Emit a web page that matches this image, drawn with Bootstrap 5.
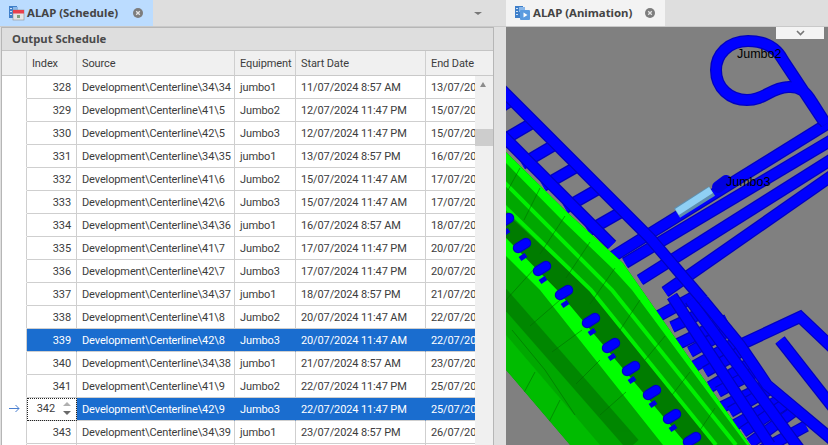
<!DOCTYPE html>
<html lang="en">
<head>
    <meta charset="UTF-8">
    <meta name="viewport" content="width=device-width, initial-scale=1.0">
    <title>ALAP</title>
    <link href="https://cdn.jsdelivr.net/npm/bootstrap@5.3.0/dist/css/bootstrap.min.css" rel="stylesheet">
    <style>
        html, body { height: 445px; overflow: hidden; }
        body { background: #e0e0e0; font-family: "Noto Sans", "Open Sans", sans-serif; font-size: 11px; color: #3c3c3c; }
        .left-pane { width: 506px; }
        .right-pane { width: 322px; }
        .tabstrip { height: 27px; background: #dedede; border-bottom: 1px solid #c9c9c9; }
        .doc-tab { height: 26px; font-weight: 700; font-size: 11.4px; color: #444; gap: 2px; }
        .doc-tab.schedule { width: 153px; background: #bbdcff; padding-left: 9px; }
        .doc-tab.animation { width: 159px; background: #f3f3f3; padding-left: 9px; }
        .doc-tab .close-dot { margin-left: auto; margin-right: 10px; }
        .strip-arrow { width: 0; height: 0; border-left: 4px solid transparent; border-right: 4px solid transparent; border-top: 3px solid #777; margin-right: 24px; }
        .group-box { width: 493px; height: 418px; margin-left: 1px; border: 1px solid #b6b6b6; border-bottom: 0; background: #fff; overflow: hidden; }
        .group-title { height: 23px; background: #dedede; font-weight: 700; font-size: 11.3px; color: #4a4a4a; padding-left: 10px; border-bottom: 1px solid #c4c4c4; }
        .grid-wrap { position: relative; height: 395px; overflow: hidden; }
        table.sched { table-layout: fixed; width: 600px; border-collapse: separate; border-spacing: 0; margin: 0; }
        table.sched th, table.sched td { height: 23px; padding: 2px 2px 0 5px; border-right: 1px solid #cfcfcf; border-bottom: 1px solid #cfcfcf; white-space: nowrap; overflow: hidden; font-family: Roboto, "Noto Sans", sans-serif; font-weight: 400; font-size: 11px; letter-spacing: -.12px; color: #3c3c3c; vertical-align: middle; background: #fff; box-shadow: none; }
        table.sched th { height: 25px; background: #f0f0f0; border-bottom-color: #c9c9c9; }
        table.sched td.ind { background: #fff; border-bottom-color: transparent; text-align: center; padding: 0; }
        table.sched th.ind { padding: 0; }
        table.sched td.num { text-align: right; padding-right: 5px; }
        table.sched tr.sel td:not(.ind):not(.edit) { background: #1a6dcf; color: #fff; border-right-color: #1a6dcf; border-bottom-color: #cfcfcf; }
        table.sched td.edit { outline: 1px dotted #222; outline-offset: -1px; text-align: right; padding-right: 5px; padding-top: 0; }
        .spin { display: inline-flex; flex-direction: column; gap: 5px; vertical-align: middle; margin-left: 8px; }
        .spin i { display: block; width: 0; height: 0; border-left: 4px solid transparent; border-right: 4px solid transparent; }
        .spin i.up { border-bottom: 4px solid #b0b0b0; }
        .spin i.dn { border-top: 4px solid #6a6a6a; }
        .vscroll { position: absolute; left: 473px; top: 25px; bottom: 0; width: 18px; background: #f0f0f0; }
        .vscroll .arrow { position: absolute; left: 5px; top: 6px; width: 0; height: 0; border-left: 3.5px solid transparent; border-right: 3.5px solid transparent; border-bottom: 5px solid #8c8c8c; }
        .vscroll .thumb { position: absolute; left: 0; top: 53px; width: 18px; height: 17px; background: #cdcdcd; }
        .view3d { position: relative; height: 418px; }
        .view3d svg { display: block; }
        .view3d text { font-family: "Liberation Sans", sans-serif; font-size: 12.5px; fill: #000; }
        .view-drop { position: absolute; left: 270px; top: 0; width: 48px; height: 12px; background: #f4f4f4; }
    </style>
</head>
<body>
<div class="d-flex">
    <!-- Schedule pane -->
    <div class="left-pane">
        <div class="tabstrip d-flex align-items-center justify-content-between">
            <div class="doc-tab schedule d-flex align-items-center">
                <svg width="16" height="16" viewBox="0 0 16 16"><rect x="0" y="1" width="8" height="12" fill="#3f7fc9"/><rect x="1" y="3" width="2" height="1" fill="#cfe2f7"/><rect x="1" y="6" width="2" height="1" fill="#cfe2f7"/><rect x="1" y="9" width="2" height="1" fill="#cfe2f7"/><rect x="4" y="2" width="5" height="5" fill="#8ab8ea"/><rect x="4" y="5" width="11" height="10" fill="#e6e6e6" stroke="#8f8f8f" stroke-width=".6"/><rect x="4" y="5" width="11" height="3.5" fill="#e8414d"/><rect x="8" y="10" width="3" height="3" fill="#7fa07f"/></svg>
                <span>ALAP (Schedule)</span>
                <svg class="close-dot" width="10" height="10" viewBox="0 0 10 10"><circle cx="5" cy="5" r="5" fill="#7d7d7d"/><path d="M3.2 3.2l3.6 3.6M6.8 3.2l-3.6 3.6" stroke="#e4e4e4" stroke-width="1.3"/></svg>
            </div>
            <span class="strip-arrow"></span>
        </div>
        <div class="group-box">
            <div class="group-title d-flex align-items-center">Output Schedule</div>
            <div class="grid-wrap">
                <table class="table sched">
                    <colgroup><col style="width:25px"><col style="width:50px"><col style="width:158px"><col style="width:61px"><col style="width:130px"><col style="width:176px"></colgroup>
                    <thead><tr><th class="ind"></th><th>Index</th><th>Source</th><th>Equipment</th><th>Start Date</th><th>End Date</th></tr></thead>
                    <tbody>
                        <tr><td class="ind"></td><td class="num">328</td><td>Development\Centerline\34\34</td><td>jumbo1</td><td>11/07/2024 8:57 AM</td><td>13/07/2024 8:57 AM</td></tr>
                        <tr><td class="ind"></td><td class="num">329</td><td>Development\Centerline\41\5</td><td>Jumbo2</td><td>12/07/2024 11:47 PM</td><td>15/07/2024 11:47 PM</td></tr>
                        <tr><td class="ind"></td><td class="num">330</td><td>Development\Centerline\42\5</td><td>Jumbo3</td><td>12/07/2024 11:47 PM</td><td>15/07/2024 11:47 PM</td></tr>
                        <tr><td class="ind"></td><td class="num">331</td><td>Development\Centerline\34\35</td><td>jumbo1</td><td>13/07/2024 8:57 PM</td><td>16/07/2024 8:57 PM</td></tr>
                        <tr><td class="ind"></td><td class="num">332</td><td>Development\Centerline\41\6</td><td>Jumbo2</td><td>15/07/2024 11:47 AM</td><td>17/07/2024 11:47 AM</td></tr>
                        <tr><td class="ind"></td><td class="num">333</td><td>Development\Centerline\42\6</td><td>Jumbo3</td><td>15/07/2024 11:47 AM</td><td>17/07/2024 11:47 AM</td></tr>
                        <tr><td class="ind"></td><td class="num">334</td><td>Development\Centerline\34\36</td><td>jumbo1</td><td>16/07/2024 8:57 AM</td><td>18/07/2024 8:57 AM</td></tr>
                        <tr><td class="ind"></td><td class="num">335</td><td>Development\Centerline\41\7</td><td>Jumbo2</td><td>17/07/2024 11:47 PM</td><td>20/07/2024 11:47 PM</td></tr>
                        <tr><td class="ind"></td><td class="num">336</td><td>Development\Centerline\42\7</td><td>Jumbo3</td><td>17/07/2024 11:47 PM</td><td>20/07/2024 11:47 PM</td></tr>
                        <tr><td class="ind"></td><td class="num">337</td><td>Development\Centerline\34\37</td><td>jumbo1</td><td>18/07/2024 8:57 PM</td><td>21/07/2024 8:57 PM</td></tr>
                        <tr><td class="ind"></td><td class="num">338</td><td>Development\Centerline\41\8</td><td>Jumbo2</td><td>20/07/2024 11:47 AM</td><td>22/07/2024 11:47 AM</td></tr>
                        <tr class="sel"><td class="ind"></td><td class="num">339</td><td>Development\Centerline\42\8</td><td>Jumbo3</td><td>20/07/2024 11:47 AM</td><td>22/07/2024 11:47 AM</td></tr>
                        <tr><td class="ind"></td><td class="num">340</td><td>Development\Centerline\34\38</td><td>jumbo1</td><td>21/07/2024 8:57 AM</td><td>23/07/2024 8:57 AM</td></tr>
                        <tr><td class="ind"></td><td class="num">341</td><td>Development\Centerline\41\9</td><td>Jumbo2</td><td>22/07/2024 11:47 PM</td><td>25/07/2024 11:47 PM</td></tr>
                        <tr class="sel"><td class="ind"><svg width="11" height="9" viewBox="0 0 11 9"><path d="M0 4.5h10M6.5 1l3.5 3.5L6.5 8" fill="none" stroke="#4a7fd0" stroke-width="1"/></svg></td><td class="edit">342<span class="spin"><i class="up"></i><i class="dn"></i></span></td><td>Development\Centerline\42\9</td><td>Jumbo3</td><td>22/07/2024 11:47 PM</td><td>25/07/2024 11:47 PM</td></tr>
                        <tr><td class="ind"></td><td class="num">343</td><td>Development\Centerline\34\39</td><td>jumbo1</td><td>23/07/2024 8:57 PM</td><td>26/07/2024 8:57 PM</td></tr>
                        <tr><td class="ind"></td><td class="num"></td><td></td><td></td><td></td><td></td></tr>
                    </tbody>
                </table>
                <div class="vscroll"><span class="arrow"></span><span class="thumb"></span></div>
            </div>
        </div>
    </div>
    <!-- Animation pane -->
    <div class="right-pane">
        <div class="tabstrip">
            <div class="doc-tab animation d-flex align-items-center">
                <svg width="16" height="16" viewBox="0 0 16 16"><rect x="0" y="1" width="8" height="12" fill="#3f7fc9"/><rect x="1" y="3" width="2" height="1" fill="#cfe2f7"/><rect x="1" y="6" width="2" height="1" fill="#cfe2f7"/><rect x="1" y="9" width="2" height="1" fill="#cfe2f7"/><rect x="4" y="2" width="6" height="5" fill="#8ab8ea"/><rect x="5" y="5" width="10" height="10" rx="1" fill="#5b9bdf"/><path d="M8.5 7.5v5l4-2.5z" fill="#fff"/></svg>
                <span>ALAP (Animation)</span>
                <svg class="close-dot" width="10" height="10" viewBox="0 0 10 10"><circle cx="5" cy="5" r="5" fill="#7d7d7d"/><path d="M3.2 3.2l3.6 3.6M6.8 3.2l-3.6 3.6" stroke="#e4e4e4" stroke-width="1.3"/></svg>
            </div>
        </div>
        <div class="view3d">
            <svg id="scene" width="322" height="418" viewBox="506 27 322 418">
                <defs><clipPath id="greenClip"><path d="M506 152L567 212 623 263 642 290 750 445H570L506 370z"/></clipPath></defs>
                <rect x="506" y="27" width="322" height="418" fill="#808080"/>
                <g id="tubes"></g>
                <g clip-path="url(#greenClip)">
                    <rect x="506" y="140" width="260" height="305" fill="#00a800"/>
                    <path d="M506 335L600 445H570L506 370z" fill="#00bc00"/>
                    <path d="M500 293L633 445" fill="none" stroke="#008800" stroke-width="15"/>
                    <path d="M506 213L590 290 714 445H687L557 290 506 238z" fill="#007c00"/>
                    <path d="M506 238L557 290 687 445H663L540 290 506 256z" fill="#00ff00"/>
                    <path d="M506 152L567 212 623 263 642 290 750 445H747L632 290 612 268 560 218 506 163z" fill="#00ff00"/>
                    <g fill="none" stroke="#00f000">
                        <path d="M500 178L612 290 736 445" stroke-width="4"/>
                        <path d="M500 202L591 290 716 445" stroke-width="4"/>
                    </g>
                    <g fill="none" stroke="#006a00" stroke-width=".7" opacity=".8">
                        <path d="M520 168L508 190M540 188L524 220M565 216L540 254M590 242L566 278M615 268L590 304M640 300L620 330M665 336L645 360M690 372L672 395M715 408L700 430"/>
                        <path d="M506 300L535 268M530 326L560 300M552 352L582 330M576 384L600 360M600 415L626 392"/>
                        <path d="M535 372L520 400M560 400L545 430M512 330L545 370 575 415"/>
                    </g>
                    <g id="pegs"></g>
                </g>
                <text x="737" y="58">Jumbo2</text>
                <text x="726" y="186">Jumbo3</text>
            </svg>
            <div class="view-drop d-flex align-items-center justify-content-center">
                <svg width="9" height="6" viewBox="0 0 9 6"><path d="M1 1l3.5 3.5L8 1" fill="none" stroke="#777" stroke-width="1.6"/></svg>
            </div>
        </div>
    </div>
</div>

<script>
    // blue drive tunnels: dark outline with a brighter core
    const tubes = [
        // grid behind the green block, lower right
        "M655 318L697 295", "M672 327L712 308", "M676 345L727 320", "M690 352L726 332", "M693 367L737 342",
        "M705 372L740 352", "M710 387L747 365", "M718 392L755 372", "M722 407L763 387", "M730 412L772 388", "M735 425L783 398",
        "M743 432L785 404", "M750 443L793 412", "M762 450L806 426", "M690 300L800 450", "M672 296L770 445",
        "M740 345L800 317L835 350", "M780 340L835 410", "M703 300L740 345L767 385L835 442",
        // rungs and rails, upper left
        "M512 100L494 111", "M534 122L505 139", "M556 144L522 164", "M578 166L543 186", "M600 188L565 208", "M623 211L588 231",
        "M500 133L612 245",
        // the four parallel drives
        "M612 257L840 116", "M625 263L840 135", "M640 280L840 154", "M665 292L840 170",
        // main rail
        "M500 88L650 238L703 300",
        // the loop
        "M824 122L783 60C775 45 762 41 748 41C728 41 716 55 716 70C716 88 730 100 747 100C765 100 770 88 788 87C800 86 806 92 812 102L826 124"
    ];
    const svgNs = "http://www.w3.org/2000/svg";
    function addStroke(parent, d, color, width, cap) {
        const p = document.createElementNS(svgNs, "path");
        p.setAttribute("d", d);
        p.setAttribute("fill", "none");
        p.setAttribute("stroke", color);
        p.setAttribute("stroke-width", width);
        p.setAttribute("stroke-linecap", cap || "butt");
        parent.appendChild(p);
    }
    const tubeGroup = document.getElementById("tubes");
    tubes.forEach(function(d) {
        addStroke(tubeGroup, d, "#0000c0", 12);
        addStroke(tubeGroup, d, "#0000ff", 9.5);
    });
    // the piece of tunnel being cut, and the machine end
    addStroke(tubeGroup, "M677 213L712 191", "#5f8fae", 11.5);
    addStroke(tubeGroup, "M677 212L711 190", "#8fd0f4", 7);
    addStroke(tubeGroup, "M718 187L726 181", "#0000e0", 12, "round");

    // stub drives poking through the green
    const pegs = [[506,220],[523,245],[543,268],[565,292],[592,320],[612,345],[632,368],[653,392],[673,416],[693,439]];
    const pegGroup = document.getElementById("pegs");
    pegs.forEach(function(p) {
        const d = "M" + (p[0] - 5) + " " + (p[1] + 3) + "L" + (p[0] + 3) + " " + (p[1] - 2);
        addStroke(pegGroup, "M" + (p[0] - 3) + " " + (p[1] + 14) + "l6 -4", "#0000e0", 5);
        addStroke(pegGroup, d, "#0000c8", 10.5, "round");
        addStroke(pegGroup, d, "#0000ff", 8, "round");
    });
</script>
<script src="https://cdn.jsdelivr.net/npm/bootstrap@5.3.0/dist/js/bootstrap.bundle.min.js"></script>
</body>
</html>
